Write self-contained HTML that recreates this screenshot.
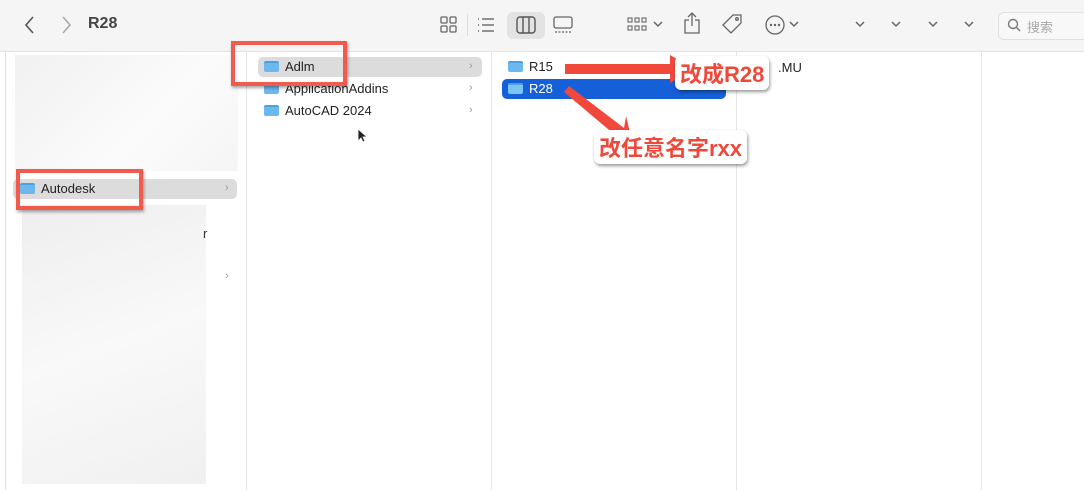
<!DOCTYPE html>
<html><head><meta charset="utf-8"><style>
body{margin:0;width:1084px;height:490px;overflow:hidden;background:#fff;font-family:"Liberation Sans","Noto Sans CJK SC",sans-serif;position:relative;font-size:13px;color:#222}
.a{position:absolute}
.tb{left:0;top:0;width:1084px;height:51px;background:#f5f5f6;border-bottom:1px solid #e3e3e3}
.vl{top:52px;width:1px;height:438px;background:#e6e6e6}
.row{height:20px;line-height:20px;border-radius:5px}
.fold{display:inline-block;width:15px;height:11px;background:#6cb8ec;border-radius:2px;vertical-align:-1px;margin-right:6px;border-top:2px solid #4aa3e0;box-sizing:border-box}
.chev{color:#999;font-size:11px}
.red{border:4px solid #f25a4e;box-shadow:1px 2px 3px rgba(0,0,0,.35)}
.lbl{color:#f0493c;font-weight:bold;font-size:22px;background:#fff;border-radius:6px;padding:1px 5px;box-shadow:1px 2px 3px rgba(0,0,0,.4)}
</style></head><body>
<div class="a tb"></div>
<svg class="a" style="left:24px;top:15px" width="12" height="20"><path d="M9 2L2 10l7 8" fill="none" stroke="#555" stroke-width="1.6"/></svg>
<svg class="a" style="left:60px;top:15px" width="12" height="20"><path d="M3 2l7 8-7 8" fill="none" stroke="#aaa" stroke-width="1.6"/></svg>
<div class="a" style="left:88px;top:15px;font-size:16px;font-weight:bold;color:#444">R28</div>
<svg class="a" style="left:440px;top:16px" width="18" height="18"><g fill="none" stroke="#666" stroke-width="1.3"><rect x="1" y="1" width="6" height="6" rx="1"/><rect x="10" y="1" width="6" height="6" rx="1"/><rect x="1" y="10" width="6" height="6" rx="1"/><rect x="10" y="10" width="6" height="6" rx="1"/></g></svg>
<div class="a" style="left:467px;top:14px;width:1px;height:22px;background:#ddd"></div>
<svg class="a" style="left:477px;top:16px" width="18" height="18"><g stroke="#666" stroke-width="1.4"><line x1="5" y1="3" x2="17" y2="3"/><line x1="5" y1="9" x2="17" y2="9"/><line x1="5" y1="15" x2="17" y2="15"/><line x1="1" y1="3" x2="2" y2="3"/><line x1="1" y1="9" x2="2" y2="9"/><line x1="1" y1="15" x2="2" y2="15"/></g></svg>
<div class="a" style="left:507px;top:12px;width:38px;height:27px;background:#e3e3e3;border-radius:6px"></div>
<svg class="a" style="left:516px;top:16px" width="20" height="18"><g fill="none" stroke="#555" stroke-width="1.4"><rect x="1" y="1" width="18" height="16" rx="3"/><line x1="7" y1="1" x2="7" y2="17"/><line x1="13" y1="1" x2="13" y2="17"/></g></svg>
<svg class="a" style="left:553px;top:16px" width="20" height="18"><g fill="none" stroke="#666" stroke-width="1.3"><rect x="1" y="1" width="18" height="11" rx="2"/><line x1="2" y1="16" x2="18" y2="16" stroke-dasharray="2 1.5"/></g></svg>
<svg class="a" style="left:627px;top:16px" width="20" height="18"><g fill="none" stroke="#666" stroke-width="1.1"><rect x="1" y="2" width="4" height="4"/><rect x="8" y="2" width="4" height="4"/><rect x="15" y="2" width="4" height="4"/><rect x="1" y="10" width="4" height="4"/><rect x="8" y="10" width="4" height="4"/><rect x="15" y="10" width="4" height="4"/></g></svg>
<svg class="a" style="left:652px;top:20px" width="12" height="8"><path d="M2 2l4 4 4-4" fill="none" stroke="#666" stroke-width="1.5"/></svg>
<svg class="a" style="left:683px;top:12px" width="18" height="22"><g fill="none" stroke="#666" stroke-width="1.3"><path d="M6 8H2v13h14V8h-4M9 1v13M5 5l4-4 4 4"/></g></svg>
<svg class="a" style="left:721px;top:13px" width="22" height="22"><g fill="none" stroke="#666" stroke-width="1.3"><path d="M12 2h8v8L10 20 2 12z"/><circle cx="16" cy="6" r="1.3"/></g></svg>
<svg class="a" style="left:764px;top:14px" width="22" height="22"><g fill="none" stroke="#666" stroke-width="1.3"><circle cx="11" cy="11" r="9"/></g><g fill="#666"><circle cx="7" cy="11" r="1.2"/><circle cx="11" cy="11" r="1.2"/><circle cx="15" cy="11" r="1.2"/></g></svg>
<svg class="a" style="left:788px;top:20px" width="12" height="8"><path d="M2 2l4 4 4-4" fill="none" stroke="#666" stroke-width="1.5"/></svg>
<svg class="a" style="left:854px;top:20px" width="12" height="8"><path d="M2 2l4 4 4-4" fill="none" stroke="#666" stroke-width="1.5"/></svg>
<svg class="a" style="left:890px;top:20px" width="12" height="8"><path d="M2 2l4 4 4-4" fill="none" stroke="#666" stroke-width="1.5"/></svg>
<svg class="a" style="left:927px;top:20px" width="12" height="8"><path d="M2 2l4 4 4-4" fill="none" stroke="#666" stroke-width="1.5"/></svg>
<svg class="a" style="left:963px;top:20px" width="12" height="8"><path d="M2 2l4 4 4-4" fill="none" stroke="#666" stroke-width="1.5"/></svg>
<div class="a" style="left:998px;top:12px;width:90px;height:26px;border:1px solid #e0e0e0;border-radius:6px;background:#f8f8f8"></div>
<svg class="a" style="left:1007px;top:18px" width="14" height="14"><g fill="none" stroke="#777" stroke-width="1.4"><circle cx="6" cy="6" r="4.5"/><line x1="9.5" y1="9.5" x2="13" y2="13"/></g></svg>
<div class="a" style="left:1027px;top:17px;color:#aaa;font-size:13px">搜索</div>

<div class="a" style="left:5px;top:52px;width:1px;height:438px;background:#e3e3e3"></div>
<div class="a vl" style="left:246px"></div>
<div class="a vl" style="left:491px"></div>
<div class="a vl" style="left:736px"></div>
<div class="a vl" style="left:981px"></div>

<div class="a" style="left:15px;top:55px;width:223px;height:116px;background:linear-gradient(135deg,#f1f1f1,#fbfbfb 60%,#f5f5f5)"></div>
<div class="a row" style="left:13px;top:179px;width:224px;background:#dcdcdc"></div>
<div class="a" style="left:20px;top:179px;line-height:20px"><span class="fold"></span>Autodesk</div>
<div class="a chev" style="left:225px;top:182px">&#8250;</div>
<div class="a chev" style="left:225px;top:270px">&#8250;</div>
<div class="a" style="left:22px;top:205px;width:184px;height:279px;background:linear-gradient(160deg,#eeeeee,#f9f9f9 50%,#f0f0f0)"></div>
<div class="a" style="left:203px;top:226px;color:#333">r</div>
<div class="a red" style="left:16px;top:169px;width:119px;height:33px"></div>

<div class="a row" style="left:258px;top:57px;width:224px;background:#dcdcdc"></div>
<div class="a" style="left:264px;top:57px;line-height:20px"><span class="fold"></span>Adlm</div>
<div class="a chev" style="left:469px;top:60px">&#8250;</div>
<div class="a" style="left:264px;top:79px;line-height:20px"><span class="fold"></span>ApplicationAddins</div>
<div class="a chev" style="left:469px;top:82px">&#8250;</div>
<div class="a" style="left:264px;top:101px;line-height:20px"><span class="fold"></span>AutoCAD 2024</div>
<div class="a chev" style="left:469px;top:104px">&#8250;</div>
<div class="a red" style="left:231px;top:41px;width:108px;height:37px"></div>
<svg class="a" style="left:357px;top:128px" width="10" height="16"><path d="M1 1v12l3-3 2 4 2-1-2-4h4z" fill="#222" stroke="#fff" stroke-width=".8"/></svg>

<div class="a" style="left:508px;top:57px;line-height:20px"><span class="fold"></span>R15</div>
<div class="a row" style="left:502px;top:79px;width:224px;background:#1560d8"></div>
<div class="a" style="left:508px;top:79px;line-height:20px;color:#fff"><span class="fold" style="background:#7cc4f4"></span>R28</div>
<div class="a" style="left:778px;top:60px">.MU</div>

<svg class="a" style="left:540px;top:50px" width="250" height="110"><g fill="#f0493c"><path d="M25 14h105v-9l25 14-25 14v-9H25z"/><path d="M24 42l5-6 55 42 2-12 7 29-28-6 10-4z"/></g></svg>
<div class="a lbl" style="left:675px;top:56px">改成R28</div>
<div class="a lbl" style="left:594px;top:130px">改任意名字rxx</div>
</body></html>
